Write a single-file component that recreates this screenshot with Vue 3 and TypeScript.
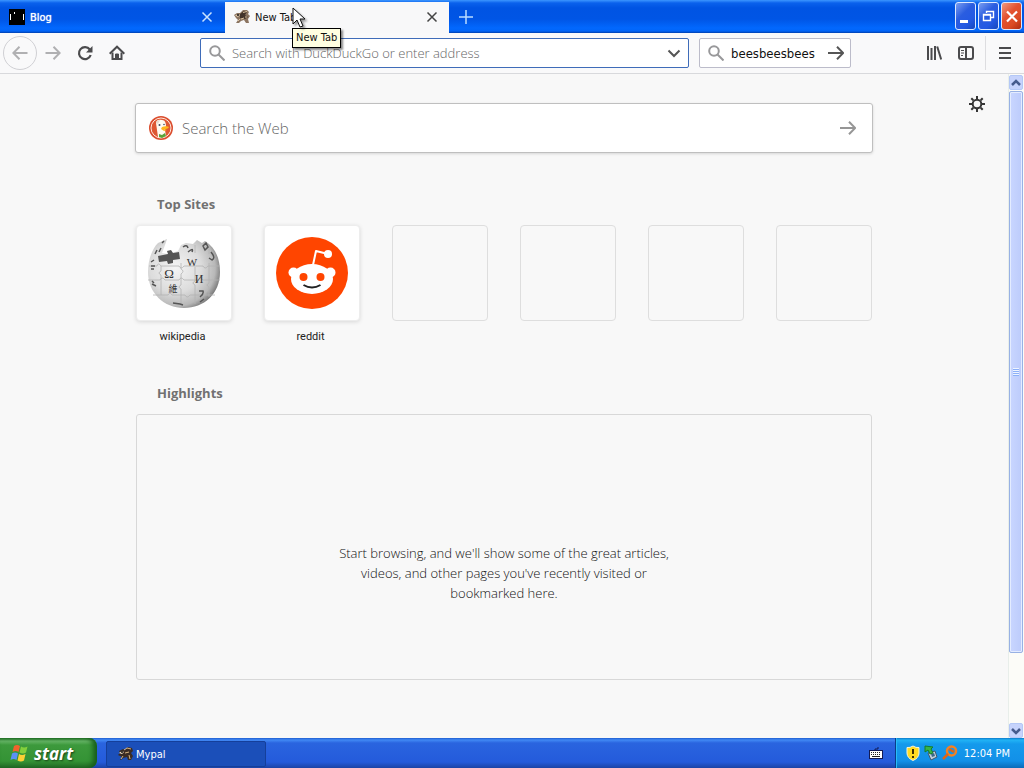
<script setup lang="ts">
import { ref } from 'vue'

interface Site {
  name: string
  icon: 'wikipedia' | 'reddit'
}

const address = ref('')
const query = ref('beesbeesbees')
const webQuery = ref('')
const sites: Site[] = [
  { name: 'wikipedia', icon: 'wikipedia' },
  { name: 'reddit', icon: 'reddit' },
]
const emptyTiles = 4
</script>

<template>
  <div class="desktop">
    <header class="titlebar">
      <div class="tab blog">
        <svg class="favicon" viewBox="0 0 16 16" aria-hidden="true">
          <rect width="16" height="16" fill="#000" />
          <path d="M1.500 5v6M14.500 5v6M5.500 3v2" stroke="#fff" />
        </svg>
        <span class="tab-title">Blog</span>
        <button class="tab-close" aria-label="Close Blog">
          <svg width="12" height="12" viewBox="0 0 12 12"><path d="M1.500 1.500l9 9M10.500 1.500l-9 9" /></svg>
        </button>
      </div>
      <div class="tab active">
        <svg class="favicon" viewBox="0 0 16 16" aria-hidden="true">
          <path d="M0 6l3-2 3 0 3-3 4 0 2 2-1 2 2 2-2 3 1 4h-3l-2-3-3 1-2 2H2l2-3-2-2z" fill="#8b7460" />
          <path d="M6 5l4-3 3 1-2 3 3 2-3 2-5-1z" fill="#42332a" />
          <path d="M1 6.500l3-1.500 2 1-2 2z" fill="#e0cbae" />
          <path d="M9 3.500l4-1M7 10l3-1M11 8l2 0M4 12l2-2" fill="none" stroke="#dcc39c" />
          <circle cx="4" cy="6" r="1" fill="#16120f" />
        </svg>
        <span class="tab-title">New Tab</span>
        <button class="tab-close" aria-label="Close New Tab">
          <svg width="12" height="12" viewBox="0 0 12 12"><path d="M1.500 1.500l9 9M10.500 1.500l-9 9" /></svg>
        </button>
        <span class="tooltip" role="tooltip">New Tab</span>
        <svg class="pointer" viewBox="0 0 14 23" aria-hidden="true">
          <path d="M1 1v16l4-4 3 7 3-1-3-7h5z" fill="#fff" stroke="#111" />
        </svg>
      </div>
      <button class="new-tab" aria-label="Open a new tab">
        <svg width="16" height="16" viewBox="0 0 16 16"><path d="M8 1v14M1 8h14" /></svg>
      </button>
      <div class="window-buttons">
        <button aria-label="Minimize">
          <svg viewBox="0 0 20 26"><path d="M4 18.500h8" stroke-width="3" /></svg>
        </button>
        <button aria-label="Restore">
          <svg viewBox="0 0 20 26"><path d="M7.500 10V8.500h7v6H12M4.500 11.500h7v6h-7zM4 12h8M7 8.500h8" stroke-width="1.400" /></svg>
        </button>
        <button class="close" aria-label="Close">
          <svg viewBox="0 0 20 26"><path d="M5 8.500l10 10M15 8.500l-10 10" stroke-width="2.200" /></svg>
        </button>
      </div>
    </header>

    <nav class="toolbar">
      <button class="back" aria-label="Back">
        <svg class="glyph" viewBox="0 0 16 16"><path d="M15.500 8H1.500M7.500 1.800L1.300 8l6.200 6.200" /></svg>
      </button>
      <button class="tool faded" aria-label="Forward">
        <svg class="glyph" viewBox="0 0 16 16"><path d="M.5 8h14M8.500 1.800L14.700 8l-6.200 6.200" /></svg>
      </button>
      <button class="tool" aria-label="Reload">
        <svg class="glyph" viewBox="0 0 16 16"><path d="M12.800 4.500A6 6 0 1 0 13.700 10" stroke-width="2.200" /><path d="M15.500 1v6.500H9z" fill="currentColor" stroke="none" /></svg>
      </button>
      <button class="tool" aria-label="Home">
        <svg class="glyph" viewBox="0 0 16 16"><path d="M.700 8.700L8 1.700l7.300 7" /><path d="M3.500 7.500V14h9V7.500" /><path d="M6.500 14V9h3v5z" fill="currentColor" stroke-width="1" /></svg>
      </button>
      <span class="spring" />
      <label class="field address">
        <svg class="glyph" viewBox="0 0 16 16"><circle cx="6" cy="6" r="4.800" /><path d="M9.500 9.500l6 6" /></svg>
        <input v-model="address" type="text" aria-label="Address" placeholder="Search with DuckDuckGo or enter address">
        <button aria-label="Show history">
          <svg class="dark" width="14" height="16" viewBox="0 0 14 16"><path d="M1.500 5.500L7 11l5.500-5.500" /></svg>
        </button>
      </label>
      <label class="field search">
        <svg class="glyph" viewBox="0 0 16 16"><circle cx="6" cy="6" r="4.800" /><path d="M9.500 9.500l6 6" /></svg>
        <input v-model="query" type="text" aria-label="Search">
        <button aria-label="Go">
          <svg class="glyph dark" viewBox="0 0 16 16"><path d="M0 8h15M9 1.800L15.200 8 9 14.200" /></svg>
        </button>
      </label>
      <span class="spring" />
      <button class="tool" aria-label="Library">
        <svg class="glyph" viewBox="0 0 16 16"><path d="M2 1v14M5.500 3v12M9 1v14M11.200 1.500l4 13" /></svg>
      </button>
      <button class="tool" aria-label="Sidebars">
        <svg class="glyph" viewBox="0 0 16 16"><rect x="1" y="2" width="14" height="12" rx="2" /><path d="M8 2v12" /><path d="M3 5.500h3M3 8h3M3 10.500h2" stroke-width="1" /></svg>
      </button>
      <span class="divider" />
      <button class="tool" aria-label="Open menu">
        <svg class="glyph" viewBox="0 0 16 16"><path d="M2 3h12M2 8h12M2 13h12" /></svg>
      </button>
    </nav>

    <div class="viewport">
      <main class="page">
        <button class="settings" aria-label="Customize your New Tab page">
          <svg class="glyph" viewBox="0 0 16 16"><circle cx="8" cy="8" r="4.300" /><path d="M8 0v3M8 13v3M0 8h3M13 8h3M2.300 2.300l2 2M11.700 11.700l2 2M13.700 2.300l-2 2M4.300 11.700l-2 2" /></svg>
        </button>
        <div class="column">
          <label class="web-search">
            <svg width="24" height="24" viewBox="0 0 24 24" aria-hidden="true">
              <circle cx="12" cy="12" r="12" fill="#db4e2f" />
              <circle cx="12" cy="12" r="10" fill="#de5833" stroke="#ffe9df" stroke-width="1" />
              <path d="M7 7c0-3 3-4 6-3 3 0 4 3 4 6l-1 4 1 6-5 2-3-1z" fill="#fffaf0" />
              <path d="M7 7c0-2 2-3 4-3l-2 4z" fill="#e9ddd0" />
              <path d="M13 11c2-1 6-1 7 0-1 2-3 2-5 2l3 1-3 1-3-2z" fill="#ffb51c" />
              <path d="M10 18l3 1 3-2 1 3-4 2-3-1z" fill="#5aa33a" />
              <circle cx="10.500" cy="9" r="1" fill="#3f5368" /><circle cx="15" cy="8.500" r=".8" fill="#3f5368" />
            </svg>
            <input v-model="webQuery" type="text" aria-label="Search the Web" placeholder="Search the Web">
            <button aria-label="Search">
              <svg class="glyph" viewBox="0 0 16 16"><path d="M0 8h15M9 1.800L15.200 8 9 14.200" /></svg>
            </button>
          </label>

          <section class="top-sites">
            <h2>Top Sites</h2>
            <ul>
              <li v-for="site in sites" :key="site.name">
                <a href="#">
                  <span class="tile">
                    <svg v-if="site.icon === 'wikipedia'" width="74" height="72" viewBox="0 0 74 72" aria-hidden="true">
                      <defs>
                        <radialGradient id="globe" cx=".38" cy=".42" r=".65">
                          <stop offset="0" stop-color="#f4f4f4" />
                          <stop offset=".55" stop-color="#dcdcdc" />
                          <stop offset=".85" stop-color="#b8b8b8" />
                          <stop offset="1" stop-color="#777" />
                        </radialGradient>
                      </defs>
                      <path d="M11 6l9-4-2 6-3 8 6 1 10-3 3-6 5-2 7 1 4-4 5 3 3-2c10 6 15 17 15 31 0 22-16 36-36 36S1 56 1 35C1 23 5 12 11 6z" fill="url(#globe)" />
                      <path d="M11 19l10-2-1-3 4-1 2 3 6-1 1 7-7 1 0 3-5 1-1-3-8 1z" fill="#555" />
                      <g fill="none" stroke="#b3b3b3" stroke-width=".8">
                        <path d="M2 29h8q1-4 4 0h18q2 4 5 0h19q2 4 5 0h12M1 43h12q2-4 5 0h14q2-4 5 0h14q2-4 5 0h17M6 58h15q2-4 4 0h13q2 4 5 0h25" />
                        <path d="M14 29v5q-4 2 0 4v20M34 26v6q4 2 0 5v11q-4 2 0 4v18M48 8v8M48 30v14q-4 2 0 4v19M62 12v5M62 26v20q-4 2 0 4v10" />
                      </g>
                      <g fill="#333" text-anchor="middle" font-family="Liberation Serif, Noto Sans CJK SC, serif">
                        <text x="22" y="41" font-size="13">Ω</text>
                        <text x="45" y="29" font-size="11">W</text>
                        <text x="52" y="46" font-size="12">И</text>
                        <text x="26" y="55" font-size="9">維</text>
                      </g>
                      <path d="M4 25l3-2M4 29h4M4 32h3M8 17l2-4M12 15l2-4M15 6l2-2M5 44l2 2M5 47l4 2M36 10q4-3 5 1M41 15q6-5 4 0M56 9l3-3 2 4-3 3zM64 15q5 6 1 8l-3-2M52 54h4q1 3-3 6M26 66l7 1 3 1M53 65l4-3" fill="none" stroke="#555" stroke-width="1.500" />
                    </svg>
                    <svg v-else width="72" height="72" viewBox="0 0 72 72" aria-hidden="true">
                      <circle cx="36" cy="36" r="36" fill="#ff4500" />
                      <path d="M37 28l3-14 12 3" fill="none" stroke="#fff" stroke-width="2" stroke-linejoin="round" />
                      <circle cx="52" cy="17" r="4" fill="#fff" />
                      <circle cx="17.500" cy="35.500" r="5" fill="#fff" /><circle cx="54.500" cy="35.500" r="5" fill="#fff" />
                      <ellipse cx="36" cy="42" rx="21" ry="15" fill="#fff" />
                      <circle cx="27.500" cy="40" r="4" fill="#ff4500" /><circle cx="44.500" cy="40" r="4" fill="#ff4500" />
                      <path d="M27.500 48q8.500 5 17 0" fill="none" stroke="#222" stroke-width="2" />
                    </svg>
                  </span>
                  <span class="site-name">{{ site.name }}</span>
                </a>
              </li>
              <li v-for="n in emptyTiles" :key="n"><span class="tile empty" /></li>
            </ul>
          </section>

          <section class="highlights">
            <h2>Highlights</h2>
            <div class="empty-state">
              <p>Start browsing, and we'll show some of the great articles, videos, and other pages you've recently visited or bookmarked here.</p>
            </div>
          </section>
        </div>
      </main>
      <div class="scrollbar" aria-hidden="true">
        <button class="scroll-arrow" tabindex="-1"><svg width="10" height="8" viewBox="0 0 10 8"><path d="M1 6l4-4 4 4" /></svg></button>
        <div class="scroll-track"><div class="scroll-thumb"><i class="grip" /></div></div>
        <button class="scroll-arrow" tabindex="-1"><svg width="10" height="8" viewBox="0 0 10 8"><path d="M1 2l4 4 4-4" /></svg></button>
      </div>
    </div>

    <footer class="taskbar">
      <button class="start">
        <svg width="20" height="20" viewBox="0 0 20 20" aria-hidden="true">
          <path d="M4 3q3-2 6 0L8.500 9q-3-2-6 0z" fill="#f2622c" />
          <path d="M11 3.500q3 2 6.500 0L16 9.500q-3 2-6.500 0z" fill="#83cf3c" />
          <path d="M2 10.500q3-2 6 0L6.500 17q-3-2-6 0z" fill="#5b91f5" />
          <path d="M9 11q3 2 6.500 0L14 17.500q-3 2-6.500 0z" fill="#fdd035" />
        </svg>
        start
      </button>
      <button class="task">
        <svg class="favicon" viewBox="0 0 16 16" aria-hidden="true">
          <path d="M1 5l4-2 2 1 3-3 4 1 1 3-2 2 2 3-2 4h-3l-1-3-4 1-2 2H2l2-3-4-2 2-2z" fill="#3b2c24" />
          <path d="M1 7l3-2 2 1-2 2z" fill="#f1dfc2" />
          <path d="M6 4l3-2 4 1M7 7l4-1M11 9l1 4M5 10l-2 3" fill="none" stroke="#d9b580" />
          <circle cx="4" cy="6" r="1" fill="#111" />
        </svg>
        Mypal
      </button>
      <button class="keyboard" aria-label="Language bar">
        <svg width="14" height="14" viewBox="0 0 14 14"><path d="M6 5V3h3V1" fill="none" stroke="#111a55" /><rect x=".5" y="4.500" width="13" height="8" fill="#fff" stroke="#111a55" /><path d="M2 6.500h10M2 8.500h10" stroke="#222" stroke-dasharray="1 1" /><path d="M3 10.500h8" stroke="#222" /></svg>
      </button>
      <div class="tray">
        <svg width="14" height="16" viewBox="0 0 14 16" aria-hidden="true"><path d="M7 1q3 2 6 1.500V8q0 5-6 7.500Q1 13 1 8V2.500Q4 3 7 1z" fill="#ffdb21" stroke="#f9f4d5" /><path d="M7 4v5M7 11v2" stroke="#3b3000" stroke-width="2" /></svg>
        <svg width="14" height="16" viewBox="0 0 14 16" aria-hidden="true"><path d="M4 8l7-2 2 6-6 3z" fill="#c4d0dc" stroke="#40586c" /><path d="M7 9l3-1 1 3-3 1z" fill="#3a6a89" /><path d="M1 1l8 1-2 2 2 4-3 1-2-4-3 2z" fill="#37b545" stroke="#147d2c" /></svg>
        <svg width="16" height="16" viewBox="0 0 16 16" aria-hidden="true"><circle cx="9.500" cy="6" r="4.500" fill="none" stroke="#f48122" stroke-width="2.500" /><path d="M6 9l-5 5M7 4l5 3" stroke="#de6418" stroke-width="2.500" /></svg>
        <time>12:04 PM</time>
      </div>
    </footer>
  </div>
</template>

<style>
body {
  margin: 0;
}
</style>

<style scoped>
.desktop {
  display: flex;
  flex-direction: column;
  min-height: 100vh;
  font-family: "DejaVu Sans Condensed", "Noto Sans", sans-serif;
  font-size: 11px;
  color: #111;
  background: #f8f8f8;
}
button, input {
  font: inherit;
  color: inherit;
  border: 0;
  padding: 0;
  background: none;
}
button {
  display: flex;
  align-items: center;
  justify-content: center;
}
svg {
  flex: none;
}
input {
  flex: 1;
  min-width: 0;
  outline: 0;
}
.titlebar {
  display: flex;
  height: 33px;
  background: linear-gradient(#3c96ff 0, #0a61ec 3px, #0054e3 8px, #0055e5 19px, #0268fe 28px, #0165f8 31px, #003fae 33px);
}
.tab {
  position: relative;
  display: flex;
  align-items: center;
  box-sizing: border-box;
  width: 224px;
  padding: 1px 9px 0;
  gap: 5px;
}
.tab.blog {
  width: 225px;
  padding-right: 10px;
  color: #fff;
  text-shadow: 0 0 1px #fff;
}
.tab.active {
  margin-top: 2px;
  padding: 0 9px 1px;
  background: #f8f8f9;
}
.favicon {
  width: 16px;
  height: 16px;
}
.tab-title {
  flex: 1;
}
.tab-close {
  width: 16px;
  height: 16px;
  color: #444;
}
.tab-close svg, .new-tab svg, .window-buttons svg {
  fill: none;
  stroke: currentColor;
  stroke-width: 1.5;
}
.blog .tab-close {
  color: #c9e3ff;
}
.tooltip {
  position: absolute;
  z-index: 2;
  left: 67px;
  top: 26px;
  padding: 2px 3px;
  line-height: 14px;
  white-space: nowrap;
  background: #ffffe1;
  border: 1px solid #000;
  box-shadow: 2px 2px 2px #0007;
}
.pointer {
  position: absolute;
  z-index: 3;
  left: 67px;
  top: 5px;
  width: 14px;
  height: 23px;
  filter: drop-shadow(2px 2px 1px #0006);
}
.new-tab {
  width: 34px;
  color: #b9dcff;
}
.window-buttons {
  display: flex;
  gap: 2px;
  margin-left: auto;
  padding: 2px 2px 3px;
}
.window-buttons button {
  box-sizing: border-box;
  width: 21px;
  height: 28px;
  border: 1px solid #dce9ff;
  border-radius: 3px;
  color: #fff;
  background: linear-gradient(135deg, #7a9df0, #2a5de0 40%, #2459e3 70%, #1648bd);
}
.window-buttons svg {
  width: 20px;
  height: 26px;
}
.window-buttons .close {
  background: linear-gradient(135deg, #f09a80, #e35230 40%, #dc4b24 70%, #ad2c10);
}
.toolbar {
  display: flex;
  align-items: center;
  box-sizing: border-box;
  height: 41px;
  padding: 0 3px;
  background: #f9f9fa;
  border-bottom: 1px solid #d8d9dc;
  color: #4b4b4d;
}
.glyph {
  width: 16px;
  height: 16px;
  fill: none;
  stroke: currentColor;
  stroke-width: 2;
}
.tool {
  width: 32px;
  height: 32px;
}
.back {
  box-sizing: border-box;
  width: 34px;
  height: 34px;
  border: 1px solid #d0d0d4;
  border-radius: 50%;
}
.back, .faded {
  color: #b0b0b2;
}
.spring {
  flex: 67 1 0;
}
.divider {
  width: 1px;
  height: 34px;
  margin: 0 3px;
  background: #dddde0;
}
.field {
  display: flex;
  align-items: center;
  box-sizing: border-box;
  height: 30px;
  gap: 7px;
  padding: 0 7px 0 8px;
  color: #98989a;
  background: #fff;
  border: 1px solid #bcbcca;
  border-radius: 2px;
  font-size: 13px;
}
.address {
  flex: 472 1 0;
  border-color: #3f6cb9;
  font-family: "Open Sans", "Noto Sans", sans-serif;
  font-weight: 300;
}
.search {
  width: 152px;
  margin-left: 10px;
  padding-right: 6px;
}
.field input {
  color: #111;
}
.field input::placeholder {
  color: #666;
  opacity: 1;
}
.dark {
  color: #555;
  fill: none;
  stroke: #555;
  stroke-width: 2;
}
.viewport {
  display: flex;
  flex: 1;
}
.page {
  position: relative;
  flex: 1;
  padding: 29px 16px 58px;
  font-family: "Open Sans", "Noto Sans", sans-serif;
}
.settings {
  position: absolute;
  top: 22px;
  right: 23px;
  color: #353535;
}
.column {
  max-width: 736px;
  margin: 0 auto;
}
.web-search {
  display: flex;
  align-items: center;
  box-sizing: border-box;
  height: 50px;
  margin: 0 -1px;
  padding: 0 16px 0 13px;
  gap: 9px;
  background: #fff;
  border: 1px solid #bfbfbf;
  border-radius: 3px;
  box-shadow: 0 1px 3px #0002;
  font-size: 15px;
  font-weight: 300;
  color: #969696;
}
.web-search input::placeholder {
  color: #666;
  opacity: 1;
}
h2 {
  margin: 0;
  padding-left: 21px;
  font-size: 13px;
  line-height: 20px;
  color: #717171;
}
.top-sites {
  margin-top: 41px;
}
ul {
  display: grid;
  grid-template-columns: repeat(6, 96px);
  justify-content: space-between;
  margin: 11px 0 0;
  padding: 0;
  list-style: none;
}
a {
  color: #222;
  text-decoration: none;
}
.tile {
  display: flex;
  align-items: center;
  justify-content: center;
  box-sizing: border-box;
  height: 96px;
  border: 1px solid #ededed;
  border-radius: 4px;
  background: #fff;
  box-shadow: 0 1px 4px #0002;
}
.tile.empty {
  background: none;
  border-color: #dedede;
  box-shadow: none;
}
.site-name {
  display: block;
  margin-top: 6px;
  padding-right: 3px;
  font-family: Roboto, sans-serif;
  line-height: 20px;
  text-align: center;
}
.highlights {
  margin-top: 36px;
}
.empty-state {
  display: flex;
  align-items: center;
  justify-content: center;
  box-sizing: border-box;
  min-height: 266px;
  margin-top: 11px;
  padding-top: 52px;
  border: 1px solid #d8d8d8;
  border-radius: 3px;
}
.empty-state p {
  max-width: 350px;
  margin: 0;
  font-size: 13px;
  font-weight: 300;
  line-height: 20px;
  text-align: center;
  color: #111;
}
.scrollbar {
  display: flex;
  flex-direction: column;
  box-sizing: border-box;
  width: 16px;
  padding: 1px 1px 0 0;
  background: #fcfcf8;
  border-left: 1px solid #e8eeea;
}
.scroll-arrow {
  height: 15px;
  border: 1px solid #b4c8f6;
  border-radius: 2px;
  background: #c6d3fc;
}
.scroll-arrow svg {
  fill: none;
  stroke: #465b8d;
  stroke-width: 2.5;
}
.scroll-track {
  flex: 1;
  padding: 1px 0;
}
.scroll-thumb {
  display: flex;
  align-items: center;
  justify-content: center;
  box-sizing: border-box;
  height: 89%;
  border: 1px solid #98b1e4;
  border-radius: 2px;
  box-shadow: inset 0 0 0 1px #e4ecff;
  background: linear-gradient(90deg, #c9d6ff, #bccbfb);
}
.grip {
  width: 6px;
  height: 8px;
  background: repeating-linear-gradient(#eef4ff 0 1px, #8cb0f8 1px 2px);
}
.taskbar {
  display: flex;
  height: 30px;
  color: #fff;
  background: linear-gradient(#1f5ed1 0, #4189f4 2px, #2a64df 5px, #245bdb 24px, #1b43a5 30px);
}
.start {
  width: 97px;
  gap: 4px;
  padding-right: 14px;
  border-radius: 0 8px 8px 0;
  font-family: "Open Sans", sans-serif;
  font-size: 17px;
  font-weight: 700;
  font-style: italic;
  text-shadow: 1px 1px 2px #174116;
  background: linear-gradient(#287b2b 0, #69b869 3px, #3c993c 7px, #349335 23px, #256d28 30px);
  box-shadow: inset -4px 0 5px #175e1b;
}
.task {
  justify-content: flex-start;
  box-sizing: border-box;
  width: 160px;
  height: 26px;
  margin: 3px 0 0 9px;
  padding-left: 11px;
  gap: 2px;
  border: 1px solid #153f9a;
  border-radius: 2px;
  background: #1b4fb9;
}
.keyboard {
  margin: 0 12px 0 auto;
}
.tray {
  display: flex;
  align-items: center;
  gap: 4px;
  padding: 0 14px 0 10px;
  border-left: 1px solid #093d88;
  box-shadow: inset 1px 0 #29bdf8;
  background: linear-gradient(#0c79c9 0, #21b3f5 2px, #149aec 6px, #1290e8 23px, #0b6bb8 30px);
}
time {
  margin-left: 2px;
}
</style>
